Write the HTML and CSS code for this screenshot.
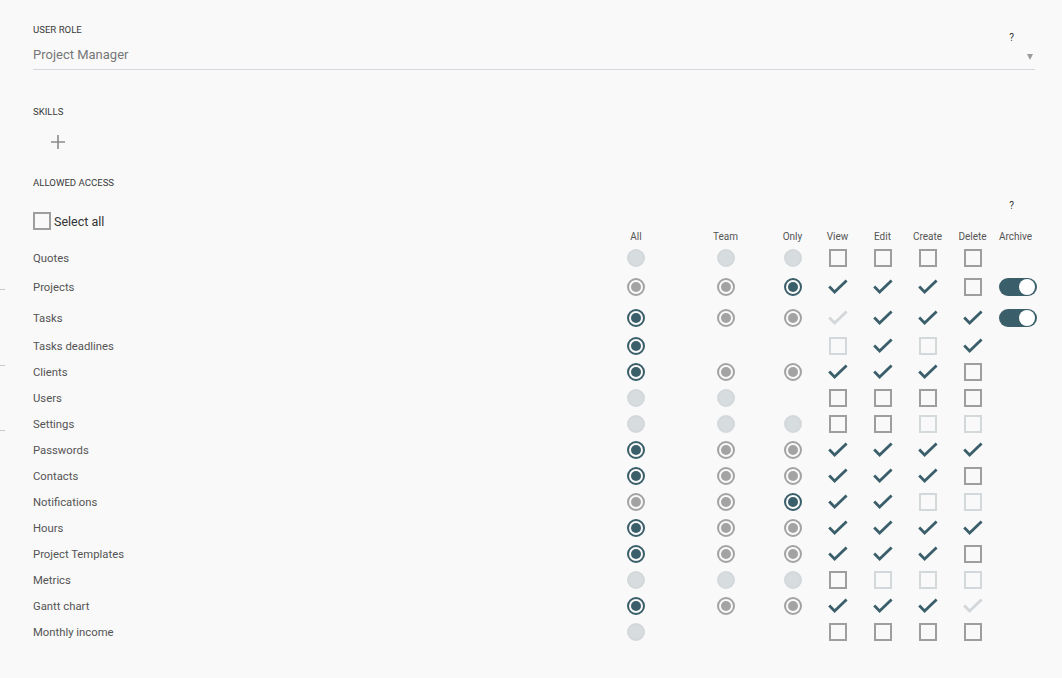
FILE: index.html
```
<!DOCTYPE html>
<html lang="en">
<head>
<meta charset="utf-8">
<title>User role</title>
<link rel="stylesheet" href="styles.css">
</head>
<body>
<svg class="defs" width="0" height="0" aria-hidden="true">
  <symbol id="check" viewBox="0 0 20 16"><path d="M1.2 7.6 L6.6 13 L18.6 1.4" fill="none" stroke="currentColor" stroke-width="2.8"/></symbol>
</svg>
<span class="edge-mark m1"></span><span class="edge-mark m2"></span><span class="edge-mark m3"></span>
<main class="page">
  <section class="role">
    <div class="role-head">
      <div class="section-label">User role</div>
      <div class="help">?</div>
    </div>
    <div class="select">
      <span class="select-value">Project Manager</span>
      <span class="caret"></span>
    </div>
  </section>

  <section class="skills">
    <div class="section-label">Skills</div>
    <svg class="plus" width="16" height="16" viewBox="0 0 16 16"><path d="M8 1 V15 M1 8 H15" stroke="#8a8a8a" stroke-width="1.6" fill="none"/></svg>
  </section>

  <section class="access">
    <div class="section-label">Allowed access</div>
    <div class="help-row"><span class="help">?</span></div>
    <label class="select-all"><span class="cb"></span><span>Select all</span></label>

    <div class="matrix">
      <div class="grid head">
        <span></span><span>All</span><span>Team</span><span>Only</span><span>View</span><span>Edit</span><span>Create</span><span>Delete</span><span class="arch">Archive</span>
      </div>

      <div class="grid row">
        <span class="name">Quotes</span>
        <span class="radio r-off"></span><span class="radio r-off"></span><span class="radio r-off"></span>
        <span class="cb"></span><span class="cb"></span><span class="cb"></span><span class="cb"></span><span></span>
      </div>
      <div class="grid row h32">
        <span class="name">Projects</span>
        <span class="radio r-gray"></span><span class="radio r-gray"></span><span class="radio r-on"></span>
        <svg class="chk"><use href="#check"/></svg><svg class="chk"><use href="#check"/></svg><svg class="chk"><use href="#check"/></svg><span class="cb"></span><span class="toggle"></span>
      </div>
      <div class="grid row h30">
        <span class="name">Tasks</span>
        <span class="radio r-on"></span><span class="radio r-gray"></span><span class="radio r-gray"></span>
        <svg class="chk chk-off"><use href="#check"/></svg><svg class="chk"><use href="#check"/></svg><svg class="chk"><use href="#check"/></svg><svg class="chk"><use href="#check"/></svg><span class="toggle"></span>
      </div>
      <div class="grid row">
        <span class="name">Tasks deadlines</span>
        <span class="radio r-on"></span><span></span><span></span>
        <span class="cb cb-off"></span><svg class="chk"><use href="#check"/></svg><span class="cb cb-off"></span><svg class="chk"><use href="#check"/></svg><span></span>
      </div>
      <div class="grid row">
        <span class="name">Clients</span>
        <span class="radio r-on"></span><span class="radio r-gray"></span><span class="radio r-gray"></span>
        <svg class="chk"><use href="#check"/></svg><svg class="chk"><use href="#check"/></svg><svg class="chk"><use href="#check"/></svg><span class="cb"></span><span></span>
      </div>
      <div class="grid row">
        <span class="name">Users</span>
        <span class="radio r-off"></span><span class="radio r-off"></span><span></span>
        <span class="cb"></span><span class="cb"></span><span class="cb"></span><span class="cb"></span><span></span>
      </div>
      <div class="grid row">
        <span class="name">Settings</span>
        <span class="radio r-off"></span><span class="radio r-off"></span><span class="radio r-off"></span>
        <span class="cb"></span><span class="cb"></span><span class="cb cb-off"></span><span class="cb cb-off"></span><span></span>
      </div>
      <div class="grid row">
        <span class="name">Passwords</span>
        <span class="radio r-on"></span><span class="radio r-gray"></span><span class="radio r-gray"></span>
        <svg class="chk"><use href="#check"/></svg><svg class="chk"><use href="#check"/></svg><svg class="chk"><use href="#check"/></svg><svg class="chk"><use href="#check"/></svg><span></span>
      </div>
      <div class="grid row">
        <span class="name">Contacts</span>
        <span class="radio r-on"></span><span class="radio r-gray"></span><span class="radio r-gray"></span>
        <svg class="chk"><use href="#check"/></svg><svg class="chk"><use href="#check"/></svg><svg class="chk"><use href="#check"/></svg><span class="cb"></span><span></span>
      </div>
      <div class="grid row">
        <span class="name">Notifications</span>
        <span class="radio r-gray"></span><span class="radio r-gray"></span><span class="radio r-on"></span>
        <svg class="chk"><use href="#check"/></svg><svg class="chk"><use href="#check"/></svg><span class="cb cb-off"></span><span class="cb cb-off"></span><span></span>
      </div>
      <div class="grid row">
        <span class="name">Hours</span>
        <span class="radio r-on"></span><span class="radio r-gray"></span><span class="radio r-gray"></span>
        <svg class="chk"><use href="#check"/></svg><svg class="chk"><use href="#check"/></svg><svg class="chk"><use href="#check"/></svg><svg class="chk"><use href="#check"/></svg><span></span>
      </div>
      <div class="grid row">
        <span class="name">Project Templates</span>
        <span class="radio r-on"></span><span class="radio r-gray"></span><span class="radio r-gray"></span>
        <svg class="chk"><use href="#check"/></svg><svg class="chk"><use href="#check"/></svg><svg class="chk"><use href="#check"/></svg><span class="cb"></span><span></span>
      </div>
      <div class="grid row">
        <span class="name">Metrics</span>
        <span class="radio r-off"></span><span class="radio r-off"></span><span class="radio r-off"></span>
        <span class="cb"></span><span class="cb cb-off"></span><span class="cb cb-off"></span><span class="cb cb-off"></span><span></span>
      </div>
      <div class="grid row">
        <span class="name">Gantt chart</span>
        <span class="radio r-on"></span><span class="radio r-gray"></span><span class="radio r-gray"></span>
        <svg class="chk"><use href="#check"/></svg><svg class="chk"><use href="#check"/></svg><svg class="chk"><use href="#check"/></svg><svg class="chk chk-off"><use href="#check"/></svg><span></span>
      </div>
      <div class="grid row">
        <span class="name">Monthly income</span>
        <span class="radio r-off"></span><span></span><span></span>
        <span class="cb"></span><span class="cb"></span><span class="cb"></span><span class="cb"></span><span></span>
      </div>
    </div>
  </section>
</main>
</body>
</html>
```
FILE: styles.css
```
* { box-sizing: border-box; }
html, body { margin: 0; }
body {
  background: #f9f9f9;
  font-family: Roboto, "Noto Sans", "Liberation Sans", sans-serif;
  color: #4f4f4f;
  position: relative;
  min-height: 678px;
}
.defs { position: absolute; width: 0; height: 0; overflow: hidden; }

.edge-mark { position: absolute; left: 0; width: 5px; height: 1px; background: #c9c9c9; }
.m1 { top: 289px; }
.m2 { top: 365px; }
.m3 { top: 430px; }

.page { padding: 24px 22px 0 33px; }

.section-label {
  font-size: 9.6px;
  line-height: 12px;
  color: #3a3a3a;
  text-transform: uppercase;
}
.help {
  font-size: 10px;
  line-height: 12px;
  color: #333;
}

.role { margin-right: 5px; }
.role-head { display: flex; justify-content: space-between; align-items: flex-start; }
.role-head .help { margin-top: 8px; margin-right: 21px; }
.select {
  display: flex;
  justify-content: space-between;
  align-items: center;
  margin-top: 3px;
  padding-bottom: 6px;
  border-bottom: 1px solid #d6d6de;
}
.select-value { font-size: 13px; line-height: 16px; color: #777; }
.caret {
  width: 0; height: 0;
  border-left: 3.5px solid transparent;
  border-right: 3.5px solid transparent;
  border-top: 6px solid #9a9a9a;
  margin-right: 2px;
  margin-top: 4px;
}

.skills { margin-top: 36px; }
.plus { display: block; margin: 16px 0 0 17px; }

.access { margin-top: 27px; }
.help-row { display: flex; justify-content: flex-end; margin-top: 11px; padding-right: 26px; }
.select-all { display: flex; align-items: center; height: 18px; font-size: 12.5px; color: #333; }
.select-all .cb { margin-right: 3px; }

.grid {
  display: grid;
  grid-template-columns: 558px 90px 89px 45px 45px 45px 45px 45px 45px;
  align-items: center;
  justify-items: center;
}
.head { margin-top: 1px; font-size: 10px; line-height: 12px; color: #555; }
.head .arch { margin-right: 4px; }
.head + .row { margin-top: 2px; }
.row { height: 26px; }
.row.h32 { height: 32px; }
.row.h30 { height: 30px; }
.name { justify-self: start; font-size: 11.3px; color: #545454; }

.radio {
  width: 18px; height: 18px;
  border-radius: 50%;
  border: 2px solid transparent;
  display: flex; align-items: center; justify-content: center;
}
.radio::after { content: ""; width: 10px; height: 10px; border-radius: 50%; }
.r-on { border-color: #3a5f6a; }
.r-on::after { background: #3a5f6a; }
.r-gray { border-color: #a3a3a3; }
.r-gray::after { background: #a3a3a3; }
.r-off { background: #d7dcdf; border-color: #d3d8db; }
.r-off::after { display: none; }

.cb { width: 18px; height: 18px; border: 2px solid #9e9e9e; display: block; }
.cb-off { border-color: #d3d8db; }

.chk { width: 20px; height: 16px; color: #3a5f6a; }
.chk-off { color: #d3d7da; }

.toggle {
  width: 38px; height: 18px;
  border-radius: 9px;
  background: #3a5f6a;
  display: flex; align-items: center; justify-content: flex-end;
  padding-right: 1.5px;
}
.toggle::after { content: ""; width: 16px; height: 16px; border-radius: 50%; background: #fff; }
```
